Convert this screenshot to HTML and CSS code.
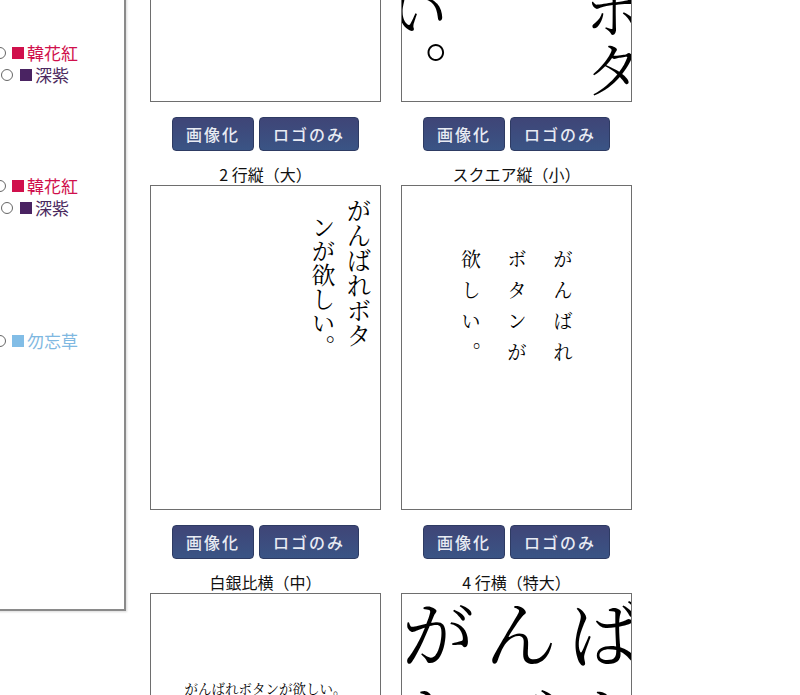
FILE: index.html
```html
<!DOCTYPE html>
<html>
  <head>
    <meta charset="utf-8" />
    <title>がんばれボタン</title>
    <link rel="stylesheet" href="styles.css">
  </head>
  <body>
    <div id="page">
      <div id="palette">
        <div class="group">
          <label class="opt"><span class="radio"></span><span class="chip kanhako"></span><span class="kanhako">韓花紅</span></label>
          <label class="opt sub"><span class="radio"></span><span class="chip fukamurasaki"></span><span class="fukamurasaki">深紫</span></label>
        </div>
        <div class="group">
          <label class="opt"><span class="radio"></span><span class="chip kanhako"></span><span class="kanhako">韓花紅</span></label>
          <label class="opt sub"><span class="radio"></span><span class="chip fukamurasaki"></span><span class="fukamurasaki">深紫</span></label>
        </div>
        <div class="group">
          <label class="opt"><span class="radio"></span><span class="chip wasurenagusa"></span><span class="wasurenagusa">勿忘草</span></label>
        </div>
      </div>

      <div id="cards">
        <div class="card">
          <div class="label">4 行縦（中）</div>
          <div class="box"></div>
          <div class="btns"><button>画像化</button><button>ロゴのみ</button></div>
        </div>
        <div class="card">
          <div class="label">2 行縦（特大）</div>
          <div class="box tate-xl"><p>がんばれボタンが欲しい。</p></div>
          <div class="btns"><button>画像化</button><button>ロゴのみ</button></div>
        </div>

        <div class="card">
          <div class="label">2 行縦（大）</div>
          <div class="box tate-l"><p><span>がんばれボタ</span><span class="l2">ンが欲しい。</span></p></div>
          <div class="btns"><button>画像化</button><button>ロゴのみ</button></div>
        </div>
        <div class="card">
          <div class="label">スクエア縦（小）</div>
          <div class="box square-s"><p>がんばれボタンが欲しい。</p></div>
          <div class="btns"><button>画像化</button><button>ロゴのみ</button></div>
        </div>

        <div class="card">
          <div class="label">白銀比横（中）</div>
          <div class="box yoko-m"><p>がんばれボタンが欲しい。</p></div>
          <div class="btns"><button>画像化</button><button>ロゴのみ</button></div>
        </div>
        <div class="card">
          <div class="label">4 行横（特大）</div>
          <div class="box yoko-xl"><p>がんばれボタンが欲しい。</p></div>
          <div class="btns"><button>画像化</button><button>ロゴのみ</button></div>
        </div>
      </div>
    </div>
  </body>
</html>
```

FILE: styles.css
```css
*{
  box-sizing: border-box;
}
body{
  margin: 0;
  background-color: #fff;
  overflow: hidden;
  font-family: "Noto Sans CJK JP", "Noto Sans", sans-serif;
  color: #111;
}
/* page is shown scrolled down a bit */
#page{
  display: flex;
  align-items: flex-start;
  margin-top: -300px;
}

/* colour picker on the left */
#palette{
  width: 226px;
  height: 911px;
  margin-left: -100px;
  padding-top: 342px;
  border-right: 2px solid #8a8a8a;
  border-bottom: 2px solid #8a8a8a;
  box-shadow: 1px 1px 2px rgba(0, 0, 0, .15);
  font-size: 17px;
  line-height: 22px;
}
.group{
  margin-bottom: 89px;
}
.group:nth-child(2){
  margin-bottom: 111px;
}
.opt{
  display: flex;
  align-items: center;
  padding-left: 94px;
  white-space: nowrap;
}
.opt.sub{
  padding-left: 101px;
}
.radio{
  width: 12px;
  height: 12px;
  border: 1px solid #666;
  border-radius: 50%;
  margin-right: 6px;
  flex-shrink: 0;
}
.opt.sub .radio{
  margin-right: 7px;
}
.chip{
  width: 12px;
  height: 12px;
  margin-right: 3px;
  flex-shrink: 0;
}
.kanhako{ color: #d0104c; }
.chip.kanhako{ background-color: #d0104c; }
.fukamurasaki{ color: #4b2a5e; }
.chip.fukamurasaki{ background-color: #4a2362; }
.wasurenagusa{ color: #7fb8e1; }
.chip.wasurenagusa{ background-color: #82bde6; }

/* cards */
#cards{
  display: grid;
  grid-template-columns: 231px 231px;
  column-gap: 20px;
  margin-left: 24px;
  padding-top: 56px;
}
.card{
  display: flex;
  flex-direction: column;
  align-items: center;
}
.label{
  font-size: 16px;
  line-height: 20px;
  margin-bottom: 1px;
  white-space: nowrap;
}
.box{
  width: 231px;
  height: 325px;
  border: 1px solid #6e6e6e;
  overflow: hidden;
  display: flex;
  font-family: "Noto Serif CJK JP", "Noto Sans CJK JP", serif;
  color: #000;
}
.box p{
  margin: 0;
  flex-shrink: 0;
}
.btns{
  display: flex;
  gap: 5px;
  margin: 15px 0 13px;
}
button{
  height: 34px;
  padding: 0 13px;
  border: 1px solid #2e3b63;
  border-radius: 4px;
  background: linear-gradient(#3f4577, #3a5485);
  color: #e8ebf3;
  font-family: "Noto Sans CJK JP", sans-serif;
  font-size: 16px;
  font-weight: 500;
  letter-spacing: 2px;
  cursor: pointer;
}

.tate-xl{
  justify-content: flex-end;
  align-items: flex-start;
}
.tate-xl p{
  writing-mode: vertical-rl;
  font-size: 60px;
  line-height: 195px;
  height: 362px;
  margin-top: -38px;
  margin-right: -80px;
}
.tate-l{
  justify-content: flex-end;
  align-items: flex-start;
  padding: 12px 4px 0 0;
}
.tate-l p{
  writing-mode: vertical-rl;
  font-size: 25px;
  line-height: 35px;
}
.tate-l span{
  display: block;
}
.tate-l .l2{
  padding-top: 17px;
  font-size: 24px;
}
.square-s{
  justify-content: center;
  align-items: flex-start;
  padding-top: 63px;
}
.square-s p{
  writing-mode: vertical-rl;
  font-size: 20px;
  letter-spacing: 11px;
  line-height: 46px;
  height: 126px;
}
.yoko-m{
  justify-content: center;
  padding-top: 86px;
}
.yoko-m p{
  font-size: 13.5px;
  line-height: 16px;
}
.yoko-xl p{
  width: 260px;
  margin-top: -7px;
  font-size: 72px;
  letter-spacing: 11px;
  line-height: 87px;
}
```
